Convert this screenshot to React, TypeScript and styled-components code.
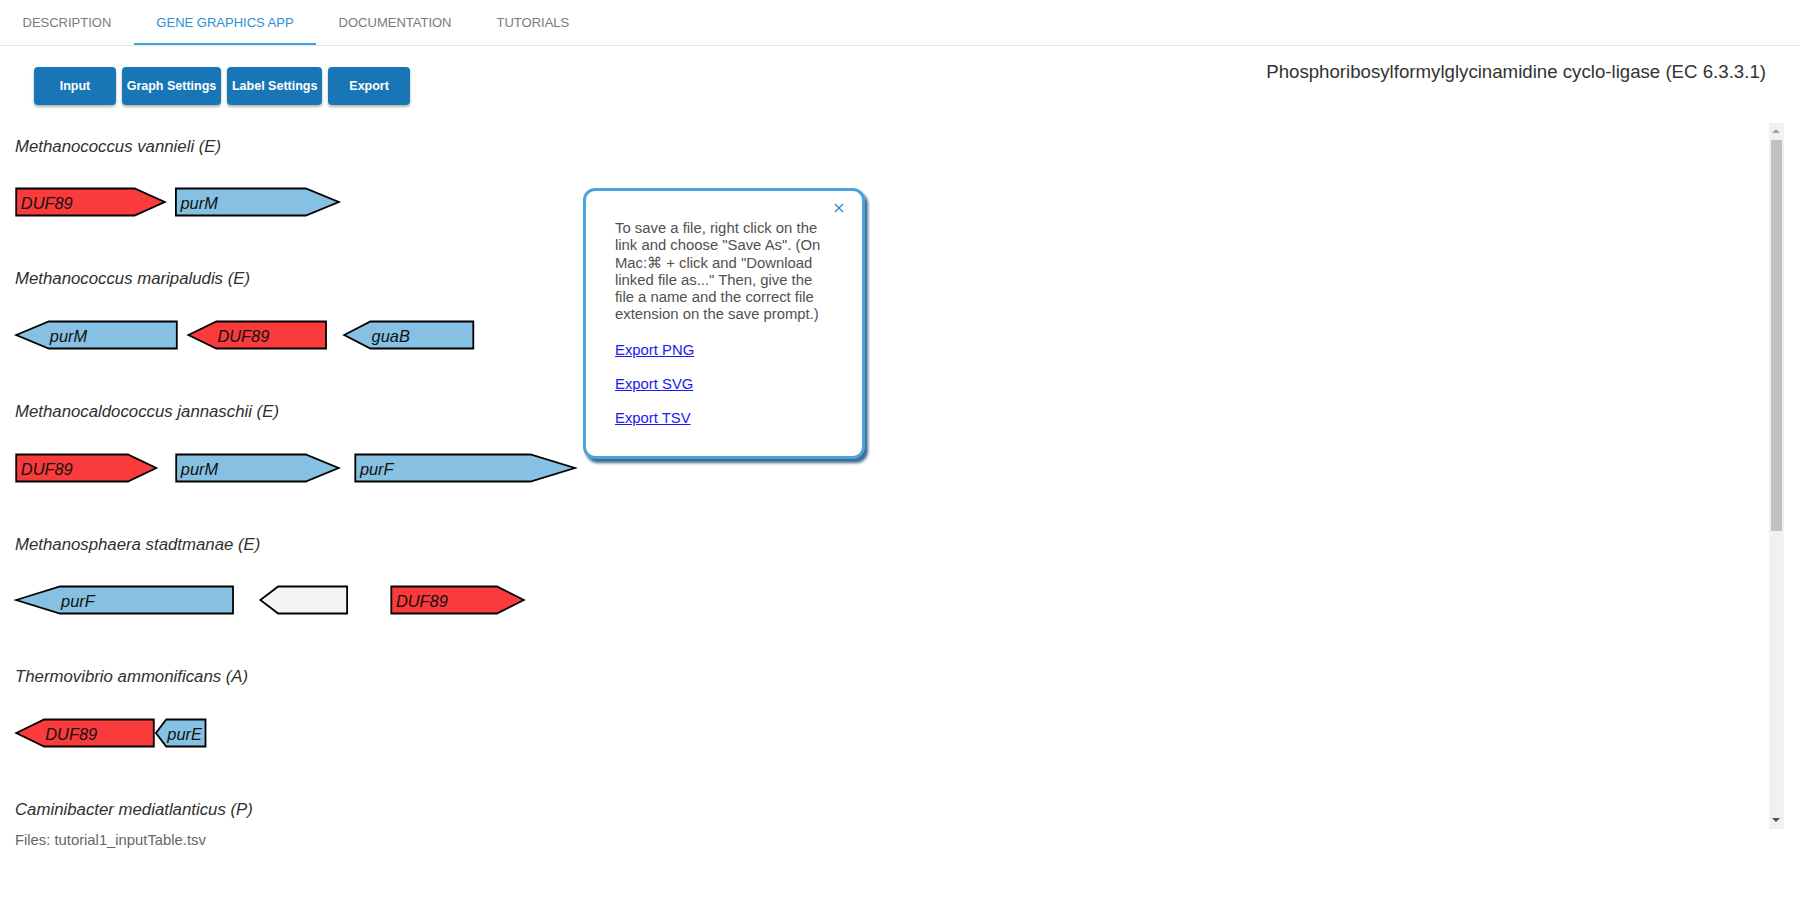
import React from 'react';
import styled, { createGlobalStyle } from 'styled-components';

const GlobalStyle = createGlobalStyle`
  html, body { margin: 0; padding: 0; background: #ffffff; }
  body { font-family: "Liberation Sans", Arial, sans-serif; overflow: hidden; }
`;

const Page = styled.div`
  position: relative;
  width: 1800px;
  height: 900px;
  overflow: hidden;
`;

const TabBar = styled.nav`
  display: flex;
  height: 45px;
  border-bottom: 1px solid #e6e6e6;
`;

const Tab = styled.div<{ $active?: boolean }>`
  display: flex;
  align-items: center;
  padding: 0 22.5px;
  font-size: 13px;
  text-transform: uppercase;
  color: ${(p) => (p.$active ? '#2b8fd4' : '#7b7b7b')};
  box-shadow: ${(p) => (p.$active ? 'inset 0 -2px 0 #3fa2e2' : 'none')};
`;

const Toolbar = styled.div`
  display: flex;
  justify-content: space-between;
  align-items: flex-start;
  padding: 21px 34px 0;
`;

const ButtonGroup = styled.div`
  display: flex;
  gap: 5.7px;
`;

const ActionButton = styled.button`
  height: 37.5px;
  min-width: 82px;
  padding: 0 5px;
  border: none;
  border-radius: 4px;
  background: #1976b6;
  color: #ffffff;
  font-family: "Liberation Sans", Arial, sans-serif;
  font-size: 12.5px;
  font-weight: bold;
  box-shadow: 0 2px 3px rgba(0, 0, 0, 0.3);
  cursor: pointer;
`;

const Title = styled.h2`
  margin: -5.7px 0 0;
  font-size: 18.67px;
  font-weight: normal;
  line-height: 22px;
  color: #333333;
`;

const ScrollArea = styled.div`
  display: flex;
  margin: 18px 16.5px 0 0;
  height: 706px;
`;

const Viewport = styled.div`
  flex: 1;
  overflow: hidden;
`;

const ScrollTrack = styled.div`
  display: flex;
  flex-direction: column;
  width: 15px;
  background: #f1f1f1;
`;

const ScrollArrow = styled.div<{ $end?: boolean }>`
  display: flex;
  align-items: center;
  justify-content: center;
  height: 17px;
  margin-top: ${(p) => (p.$end ? 'auto' : '0')};
`;

const ScrollThumb = styled.div`
  height: 391px;
  margin: 0 2px;
  background: #c1c1c1;
`;

const GenomeList = styled.div`
  padding-top: 14px;
`;

const GenomeBlock = styled.section`
  display: flex;
  flex-direction: column;
  gap: 30.7px;
  margin-bottom: 52.06px;
`;

const SpeciesName = styled.div`
  padding-left: 15px;
  font-size: 16.8px;
  font-style: italic;
  line-height: 20px;
  color: #2f2f2f;
`;

const GeneTrack = styled.svg`
  display: block;
  overflow: visible;
`;

const GeneLabel = styled.text`
  font-family: "Liberation Sans", Arial, sans-serif;
  font-size: 16.4px;
  font-style: italic;
  fill: #111111;
`;

const FilesNote = styled.div`
  margin-top: 3.5px;
  padding-left: 15px;
  font-size: 14.8px;
  line-height: 17px;
  color: #666666;
`;

const ExportPopover = styled.div`
  position: absolute;
  left: 583px;
  top: 188px;
  width: 282px;
  box-sizing: border-box;
  padding: 29px;
  background: #ffffff;
  border: 3px solid #4aa4dc;
  border-radius: 12px;
  box-shadow: 3px 4px 3px rgba(30, 80, 125, 0.85);
`;

const CloseButton = styled.button`
  position: absolute;
  top: 10.5px;
  right: 17.5px;
  width: 12px;
  height: 12px;
  padding: 0;
  border: none;
  background: transparent;
  display: flex;
  align-items: center;
  justify-content: center;
  cursor: pointer;
`;

const PopoverText = styled.p`
  margin: 0;
  font-size: 14.85px;
  line-height: 17.3px;
  color: #505050;
`;

const ExportLinks = styled.div`
  display: flex;
  flex-direction: column;
  align-items: flex-start;
  gap: 16.4px;
  margin-top: 18.7px;
`;

const ExportLink = styled.a`
  display: block;
  font-size: 14.85px;
  line-height: 17.3px;
  color: #1a1aee;
  text-decoration: underline;
`;

type Gene = { name: string; color: 'red' | 'blue' | 'white'; dir: 'r' | 'l'; x0: number; x1: number };

const FILL: Record<Gene['color'], string> = {
  red: '#f93b3c',
  blue: '#86c1e3',
  white: '#f5f5f5',
};

const genomes: { species: string; genes: Gene[] }[] = [
  {
    species: 'Methanococcus vannieli (E)',
    genes: [
      { name: 'DUF89', color: 'red', dir: 'r', x0: 15.3, x1: 166 },
      { name: 'purM', color: 'blue', dir: 'r', x0: 175, x1: 340 },
    ],
  },
  {
    species: 'Methanococcus maripaludis (E)',
    genes: [
      { name: 'purM', color: 'blue', dir: 'l', x0: 15.3, x1: 178 },
      { name: 'DUF89', color: 'red', dir: 'l', x0: 187.5, x1: 327.2 },
      { name: 'guaB', color: 'blue', dir: 'l', x0: 343.3, x1: 474.5 },
    ],
  },
  {
    species: 'Methanocaldococcus jannaschii (E)',
    genes: [
      { name: 'DUF89', color: 'red', dir: 'r', x0: 15.3, x1: 157.5 },
      { name: 'purM', color: 'blue', dir: 'r', x0: 175.3, x1: 339.8 },
      { name: 'purF', color: 'blue', dir: 'r', x0: 354.4, x1: 576 },
    ],
  },
  {
    species: 'Methanosphaera stadtmanae (E)',
    genes: [
      { name: 'purF', color: 'blue', dir: 'l', x0: 15.3, x1: 234.2 },
      { name: '', color: 'white', dir: 'l', x0: 259.5, x1: 348.3 },
      { name: 'DUF89', color: 'red', dir: 'r', x0: 390.4, x1: 525 },
    ],
  },
  {
    species: 'Thermovibrio ammonificans (A)',
    genes: [
      { name: 'DUF89', color: 'red', dir: 'l', x0: 15.3, x1: 155 },
      { name: 'purE', color: 'blue', dir: 'l', x0: 155, x1: 206.7 },
    ],
  },
  {
    species: 'Caminibacter mediatlanticus (P)',
    genes: [],
  },
];

const TOP = 1.5;
const BOTTOM = 28.5;
const MID = 15;

function GeneArrow({ gene }: { gene: Gene }) {
  const a = gene.x0 + 0.9;
  const b = gene.x1 - 1.2;
  const head = (gene.x1 - gene.x0) * 0.2;
  const points =
    gene.dir === 'r'
      ? `${a},${TOP} ${b - head},${TOP} ${b},${MID} ${b - head},${BOTTOM} ${a},${BOTTOM}`
      : `${a},${MID} ${a + head},${TOP} ${b},${TOP} ${b},${BOTTOM} ${a + head},${BOTTOM}`;
  const labelX = gene.dir === 'r' ? gene.x0 + 5.5 : gene.x0 + head + 2;
  return (
    <g>
      <polygon points={points} fill={FILL[gene.color]} stroke="#000000" strokeWidth={1.8} />
      {gene.name && (
        <GeneLabel x={labelX} y={MID + 0.5} dominantBaseline="central">
          {gene.name}
        </GeneLabel>
      )}
    </g>
  );
}

export default function App() {
  return (
    <Page>
      <GlobalStyle />
      <TabBar>
        <Tab>Description</Tab>
        <Tab $active>Gene Graphics App</Tab>
        <Tab>Documentation</Tab>
        <Tab>Tutorials</Tab>
      </TabBar>

      <Toolbar>
        <ButtonGroup>
          <ActionButton>Input</ActionButton>
          <ActionButton>Graph Settings</ActionButton>
          <ActionButton>Label Settings</ActionButton>
          <ActionButton>Export</ActionButton>
        </ButtonGroup>
        <Title>Phosphoribosylformylglycinamidine cyclo-ligase (EC 6.3.3.1)</Title>
      </Toolbar>

      <ScrollArea>
        <Viewport>
          <GenomeList>
            {genomes.map((g) => (
              <GenomeBlock key={g.species}>
                <SpeciesName>{g.species}</SpeciesName>
                <GeneTrack width={620} height={30} viewBox="0 0 620 30">
                  {g.genes.map((gene, i) => (
                    <GeneArrow key={i} gene={gene} />
                  ))}
                </GeneTrack>
              </GenomeBlock>
            ))}
          </GenomeList>
        </Viewport>
        <ScrollTrack>
          <ScrollArrow>
            <svg width="8" height="4" viewBox="0 0 8 4">
              <path d="M0 4 L4 0 L8 4 Z" fill="#a3a3a3" />
            </svg>
          </ScrollArrow>
          <ScrollThumb />
          <ScrollArrow $end>
            <svg width="8" height="4" viewBox="0 0 8 4">
              <path d="M0 0 L8 0 L4 4 Z" fill="#505050" />
            </svg>
          </ScrollArrow>
        </ScrollTrack>
      </ScrollArea>

      <FilesNote>Files: tutorial1_inputTable.tsv</FilesNote>

      <ExportPopover>
        <CloseButton aria-label="Close">
          <svg width="10" height="10" viewBox="0 0 10 10">
            <path d="M1 1 L9 9 M9 1 L1 9" stroke="#2a8fd0" strokeWidth="1.4" fill="none" />
          </svg>
        </CloseButton>
        <PopoverText>
          To save a file, right click on the link and choose "Save As". (On Mac:⌘ + click and "Download linked
          file as..." Then, give the file a name and the correct file extension on the save prompt.)
        </PopoverText>
        <ExportLinks>
          <ExportLink href="#png">Export PNG</ExportLink>
          <ExportLink href="#svg">Export SVG</ExportLink>
          <ExportLink href="#tsv">Export TSV</ExportLink>
        </ExportLinks>
      </ExportPopover>
    </Page>
  );
}
